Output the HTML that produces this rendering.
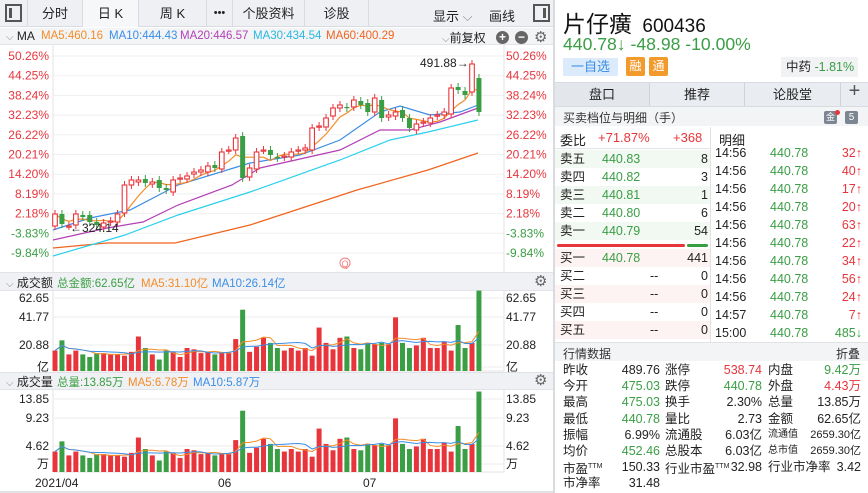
<!DOCTYPE html>
<html><head><meta charset="utf-8">
<style>
*{margin:0;padding:0;box-sizing:border-box}
body{width:868px;height:493px;overflow:hidden;background:#fff;font-family:"Liberation Sans","Noto Sans CJK SC",sans-serif;font-size:12px;color:#222;position:relative}
.a{position:absolute;white-space:nowrap}
.g{color:#3a9e44}.r{color:#e8353c}.o{color:#f28c28}.b{color:#3a8ee6}.p{color:#b33fb5}.c{color:#2bb7e0}.oo{color:#f0641e}
.tab{position:absolute;top:0;height:27px;border-right:1px solid #d8dbe0;text-align:center;line-height:27px;font-size:13px;color:#222}
.row{position:absolute;left:555px;width:155px;height:18px;line-height:18px;font-size:12.5px}
.row span{position:absolute}
.d{position:absolute;left:712px;width:156px;height:18px;line-height:18px;font-size:12.5px}
.d span{position:absolute}
.q{position:absolute;height:16px;line-height:16px;font-size:12.5px}
</style></head><body>
<div class="a" style="left:0;top:0;width:553px;height:27px;background:#eef0f3;border-bottom:1px solid #d8dbe0"></div>
<div class="a" style="left:5px;top:4px;width:17px;height:18px;border:2px solid #555"><div style="position:absolute;left:2px;top:2px;width:3px;height:10px;background:#555"></div></div>
<div class="tab" style="left:0;width:28px;"></div>
<div class="tab" style="left:28px;width:55px">分时</div>
<div class="tab" style="left:83px;width:56px;background:#f6f7f9">日 K</div>
<div class="tab" style="left:139px;width:68px">周 K</div>
<div class="tab" style="left:207px;width:26px;font-size:11px">•••</div>
<div class="tab" style="left:233px;width:72px">个股资料</div>
<div class="tab" style="left:305px;width:64px">诊股</div>
<div class="a" style="left:433px;top:6px;font-size:13px">显示 <span style="color:#888">⌵</span></div>
<div class="a" style="left:489px;top:6px;font-size:13px">画线</div>
<div class="a" style="left:533px;top:4px;width:17px;height:18px;border:2px solid #555"><div style="position:absolute;right:2px;top:2px;width:3px;height:10px;background:#555"></div></div>
<div class="a" style="left:0;top:28px;width:553px;height:17px;background:#f3f4f6;border-bottom:1px solid #e2e4e8"></div>
<div class="a" style="left:6px;top:29px;font-size:12px"><span style="color:#888;font-size:10px">⌵</span> MA</div>
<div class="a o" style="left:41px;top:30px;font-size:11.5px">MA5:460.16</div>
<div class="a b" style="left:109px;top:30px;font-size:11.5px">MA10:444.43</div>
<div class="a p" style="left:180px;top:30px;font-size:11.5px">MA20:446.57</div>
<div class="a c" style="left:253px;top:30px;font-size:11.5px">MA30:434.54</div>
<div class="a oo" style="left:326px;top:30px;font-size:11.5px">MA60:400.29</div>
<div class="a" style="left:442px;top:29px;font-size:12px"><span style="color:#888;font-size:10px">⌵</span>前复权</div>
<div class="a" style="left:496px;top:31px;width:13px;height:13px;border-radius:50%;background:#666;color:#fff;font-size:12px;line-height:12px;text-align:center;font-weight:bold">+</div>
<div class="a" style="left:515px;top:31px;width:13px;height:13px;border-radius:50%;background:#666;color:#fff;font-size:12px;line-height:12px;text-align:center;font-weight:bold">−</div>
<div class="a" style="left:534px;top:28px;font-size:15px;color:#666">⚙</div>
<div class="a" style="left:0;top:272px;width:553px;height:19px;background:#f0f1f4;border-top:1px solid #dfe1e5;border-bottom:1px solid #e2e4e8"></div>
<div class="a" style="left:6px;top:274px;font-size:12px"><span style="color:#888;font-size:10px">⌵</span> 成交额</div>
<div class="a g" style="left:57px;top:275px;font-size:11.5px">总金额:62.65亿</div>
<div class="a o" style="left:141px;top:275px;font-size:11.5px">MA5:31.10亿</div>
<div class="a b" style="left:212px;top:275px;font-size:11.5px">MA10:26.14亿</div>
<div class="a" style="left:534px;top:272px;font-size:15px;color:#666">⚙</div>
<div class="a" style="left:0;top:372px;width:553px;height:18px;background:#f0f1f4;border-top:1px solid #dfe1e5;border-bottom:1px solid #e2e4e8"></div>
<div class="a" style="left:6px;top:373px;font-size:12px"><span style="color:#888;font-size:10px">⌵</span> 成交量</div>
<div class="a g" style="left:57px;top:374px;font-size:11.5px">总量:13.85万</div>
<div class="a o" style="left:128px;top:374px;font-size:11.5px">MA5:6.78万</div>
<div class="a b" style="left:193px;top:374px;font-size:11.5px">MA10:5.87万</div>
<div class="a" style="left:534px;top:371px;font-size:15px;color:#666">⚙</div>
<svg id="ch" class="a" style="left:0;top:0" width="553" height="493" font-family="Liberation Sans" font-size="12"></svg>
<div class="a" style="left:553px;top:0;width:2px;height:493px;background:#d8dbe0"></div>
<div class="a" style="left:0;top:491px;width:553px;height:2px;background:#e0e2e6"></div>

<div class="a" style="left:563px;top:5px;font-size:23px;color:#111">片仔癀 <span style="font-size:19px;margin-left:4px">600436</span></div>
<div class="a g" style="left:563px;top:34px;font-size:17.6px">440.78↓ -48.98 -10.00%</div>
<div class="a" style="left:563px;top:58px;width:55px;height:18px;background:#dcebfb;color:#3a8ee6;font-size:13px;line-height:18px;text-align:center">一自选</div>
<div class="a" style="left:626px;top:57px;width:19px;height:19px;background:#f39a2c;color:#fff;font-size:12px;line-height:19px;text-align:center;border-radius:2px">融</div>
<div class="a" style="left:649px;top:57px;width:19px;height:19px;background:#f39a2c;color:#fff;font-size:12px;line-height:19px;text-align:center;border-radius:2px">通</div>
<div class="a" style="left:781px;top:57px;width:77px;height:20px;background:#f1f2f4;font-size:12.5px;line-height:20px;padding-left:5px">中药 <span class="g">-1.81%</span></div>
<div class="a" style="left:555px;top:82px;width:313px;height:25px;background:#e9ecf0;border-top:1px solid #d8dbe0;border-bottom:1px solid #d8dbe0"></div>
<div class="a" style="left:555px;top:83px;width:95px;height:23px;background:#e3e7ec;border-right:1px solid #cfd3d9;text-align:center;line-height:23px;font-size:13px">盘口</div>
<div class="a" style="left:650px;top:83px;width:95px;height:23px;border-right:1px solid #cfd3d9;text-align:center;line-height:23px;font-size:13px">推荐</div>
<div class="a" style="left:745px;top:83px;width:96px;height:23px;border-right:1px solid #cfd3d9;text-align:center;line-height:23px;font-size:13px">论股堂</div>
<div class="a" style="left:841px;top:80px;width:27px;text-align:center;font-size:20px;color:#555">+</div>
<div class="a" style="left:555px;top:107px;width:313px;height:19px;background:#f3f4f6"></div>
<div class="a" style="left:563px;top:109px;font-size:12px;color:#333">买卖档位与明细（手）</div>
<div class="a" style="left:824px;top:111px;width:13px;height:13px;background:#7c8592;border-radius:2px;color:#fff;font-size:9px;text-align:center;line-height:13px">金</div>
<div class="a" style="left:835px;top:110px;width:5px;height:5px;background:#e8353c;border-radius:50%"></div>
<div class="a" style="left:845px;top:111px;width:13px;height:13px;background:#7c8592;border-radius:2px;color:#fff;font-size:10px;text-align:center;line-height:13px">5</div>
<div id="ob"></div>
<div class="a" style="left:555px;top:126px;width:313px;height:22px;background:#fff"></div>
<div class="a" style="left:710px;top:127px;width:1px;height:216px;background:#dfe1e5"></div>
<div class="a" style="left:555px;top:148px;width:155px;height:1px;background:#e3e5e8"></div>
<div class="a" style="left:560px;top:130px;font-size:13px">委比</div>
<div class="a r" style="left:598px;top:130px;font-size:13px">+71.87%</div>
<div class="a r" style="left:673px;top:130px;font-size:13px">+368</div>
<div class="a" style="left:719px;top:130px;font-size:13px">明细</div>
<div class="a" style="left:557px;top:244px;width:128px;height:3px;background:#e8353c;border-radius:2px"></div>
<div class="a" style="left:687px;top:244px;width:21px;height:3px;background:#3a9e44;border-radius:2px"></div>
<div class="a" style="left:555px;top:342px;width:313px;height:19px;background:#f3f4f6;border-top:1px solid #e0e2e6"></div>
<div class="a" style="left:563px;top:345px;font-size:12px;color:#333">行情数据</div>
<div class="a" style="left:836px;top:345px;font-size:12px;color:#333">折叠</div>
<div id="qd"></div>
<script>
var N=62,X=function(i){return 55+i*6.95};
var C=[214,224,226,214,217,222,225,223,221,214,185,180,180,183,182,188,190,180,178,176,172,170,166,168,152,150,138,178,168,152,150,155,158,156,152,150,148,128,126,118,108,105,108,100,105,112,98,118,115,112,118,128,124,122,118,115,112,88,90,95,64,112];
var O=[];for(var i=0;i<N;i++)O.push(i?C[i-1]+((i*7)%5-2):226);
O[27]=136;O[61]=78;O[60]=92;O[10]=213;
var A=[16,24,13,16,13,11,14,14,13,13,12,15,27,18,13,9,16,15,11,18,17,14,15,13,14,14,25,48,15,19,26,22,18,16,18,16,18,12,34,22,17,26,27,18,17,22,21,22,21,42,22,18,20,26,18,18,23,16,36,18,22,63];
var s='';
function ln(x1,y1,x2,y2,c,w){return '<line x1="'+x1+'" y1="'+y1+'" x2="'+x2+'" y2="'+y2+'" stroke="'+c+'" stroke-width="'+(w||1)+'"/>'}
function tx(x,y,t,c,a){return '<text x="'+x+'" y="'+y+'" fill="'+c+'"'+(a?' text-anchor="'+a+'"':'')+'>'+t+'</text>'}
var lab=['50.26%','44.25%','38.24%','32.23%','26.22%','20.21%','14.20%','8.19%','2.18%','-3.83%','-9.84%'];
for(var k=0;k<11;k++){var y=56+k*19.7;s+=ln(53,y,504,y,'#efefef');var col=k<9?'#e8353c':'#3a9e44';s+=tx(49,y+4,lab[k],col,'end')+tx(506,y+4,lab[k],col);}
s+=ln(53,45,53,272,'#e3e3e3')+ln(504,45,504,272,'#e3e3e3');
s+=ln(53,291,53,371,'#e3e3e3')+ln(504,291,504,371,'#e3e3e3')+ln(53,371,504,371,'#e3e3e3');
s+=ln(53,390,53,472,'#e3e3e3')+ln(504,390,504,472,'#e3e3e3')+ln(53,472,504,472,'#e3e3e3');
[[298,'62.65'],[317,'41.77'],[345,'20.88'],[367,'亿']].forEach(function(p){s+=ln(53,p[0],504,p[0],'#eee');s+=tx(49,p[0]+4,p[1],'#222','end')+tx(506,p[0]+4,p[1],'#222');});
[[399,'13.85'],[418,'9.23'],[446,'4.62'],[464,'万']].forEach(function(p){s+=ln(53,p[0],504,p[0],'#eee');s+=tx(49,p[0]+4,p[1],'#222','end')+tx(506,p[0]+4,p[1],'#222');});
function pl(pts,c,w){return '<polyline fill="none" stroke="'+c+'" stroke-width="'+(w||1.2)+'" points="'+pts.map(function(p){return p.join(',')}).join(' ')+'"/>'}
s+=pl([[53,248],[107,243],[175,243],[250,225],[357,190],[428,170],[478,153]],'#f0641e');
s+=pl([[53,256],[125,235],[178,215],[250,192],[340,160],[390,140],[428,132],[478,120]],'#2bd0ec');
s+=pl([[53,240],[107,228],[143,222],[178,205],[232,185],[260,168],[340,150],[380,130],[410,130],[440,122],[478,108]],'#b33fb5');
s+=pl([[53,230],[90,218],[130,210],[178,185],[250,163],[300,155],[340,140],[380,112],[400,106],[430,115],[460,112],[478,105]],'#3a8ee6');
var m5=[];for(var i=0;i<N;i++){var a=0,n=0;for(var j=Math.max(0,i-4);j<=i;j++){a+=C[j];n++}m5.push([X(i),a/n]);}
s+=pl(m5,'#f28c28');
for(var i=0;i<N;i++){var x=X(i),o=O[i],c=C[i],up=c<=o,t=Math.min(o,c),b=Math.max(o,c),h=Math.max(b-t,1.2);
var col=up?'#e8353c':'#3a9e44';s+=ln(x,t-4,x,b+4,col);
s+=up?'<rect x="'+(x-2.3)+'" y="'+t+'" width="4.6" height="'+h+'" fill="#fff" stroke="'+col+'" stroke-width="1.1"/>':'<rect x="'+(x-2.5)+'" y="'+t+'" width="5" height="'+h+'" fill="'+col+'"/>';
var v=A[i]/62.65*80;s+='<rect x="'+(x-2.5)+'" y="'+(371-v)+'" width="5" height="'+v+'" fill="'+col+'"/>';
s+='<rect x="'+(x-2.5)+'" y="'+(472-v)+'" width="5" height="'+v+'" fill="'+col+'"/>';}
function ma(n,base){var r=[];for(var i=0;i<N;i++){var a=0,k=0;for(var j=Math.max(0,i-n+1);j<=i;j++){a+=A[j];k++}r.push([X(i),base-a/k/62.65*80]);}return r}
s+=pl(ma(5,371),'#f28c28',1)+pl(ma(10,371),'#3a8ee6',1)+pl(ma(5,472),'#f28c28',1)+pl(ma(10,472),'#3a8ee6',1);
s+=tx(420,67,'491.88→','#222')+tx(70,232,'←324.14','#222');
s+='<circle cx="345" cy="263" r="5" fill="none" stroke="#f08080"/>'+tx(345,267,'Q','#f08080','middle').replace('<text','<text font-size="9"');
s+=tx(35,487,'2021/04','#222')+tx(218,487,'06','#222')+tx(363,487,'07','#222');
document.getElementById('ch').innerHTML=s;
var ob='',names=['卖五','卖四','卖三','卖二','卖一'],pr=['440.83','440.82','440.81','440.80','440.79'],qv=['8','3','1','6','54'];
for(var k=0;k<5;k++){ob+='<div class="row" style="top:'+(150+k*18)+'px;background:'+(k%2?'#fff':'#f2f8f2')+'"><span style="left:5px">'+names[k]+'</span><span class="g" style="left:47px">'+pr[k]+'</span><span style="right:2px">'+qv[k]+'</span></div>';}
var bn=['买一','买二','买三','买四','买五'];
for(var k=0;k<5;k++){ob+='<div class="row" style="top:'+(249+k*18)+'px;background:'+(k%2?'#fff':'#fdf3f3')+'"><span style="left:5px">'+bn[k]+'</span><span class="'+(k?'':'g')+'" style="'+(k?'left:95px':'left:47px')+'">'+(k?'--':'440.78')+'</span><span style="right:2px">'+(k?'0':'441')+'</span></div>';}
var dv=['32','40','17','20','63','22','34','56','24','7'];
for(var k=0;k<11;k++){var last=k==10;ob+='<div class="d" style="top:'+(144+k*18)+'px"><span style="left:3px">'+(k==9?'14:57':last?'15:00':'14:56')+'</span><span class="g" style="left:58px">440.78</span><span class="'+(last?'g':'r')+'" style="right:6px">'+(last?'485↓':dv[k]+'↑')+'</span></div>';}
document.getElementById('ob').innerHTML=ob;
var R=[['昨收','489.76','','涨停','538.74','r','内盘','9.42万','g'],['今开','475.03','g','跌停','440.78','g','外盘','4.43万','r'],['最高','475.03','g','换手','2.30%','','总量','13.85万',''],['最低','440.78','g','量比','2.73','','金额','62.65亿',''],['振幅','6.99%','','流通股','6.03亿','','流通值','2659.30亿','s'],['均价','452.46','g','总股本','6.03亿','','总市值','2659.30亿','s'],['市盈<sup style="font-size:7px">TTM</sup>','150.33','','行业市盈<sup style="font-size:7px">TTM</sup>','32.98','','行业市净率','3.42','']];
var q='';R.forEach(function(r,k){var y=362+k*16.2;
q+='<div class="q" style="left:563px;top:'+y+'px">'+r[0]+'</div><div class="q '+r[2]+'" style="right:208px;top:'+y+'px">'+r[1]+'</div>';
q+='<div class="q" style="left:665px;top:'+y+'px">'+r[3]+'</div><div class="q '+r[5]+'" style="right:106px;top:'+y+'px">'+r[4]+'</div>';
var sm=r[8]=='s';q+='<div class="q" style="left:768px;top:'+y+'px;'+(sm?'font-size:10px':'')+'">'+r[6]+'</div><div class="q '+(sm?'':r[8])+'" style="right:7px;top:'+y+'px;'+(sm?'font-size:11px':'')+'">'+r[7]+'</div>';});
q+='<div class="q" style="left:563px;top:475px">市净率</div><div class="q" style="right:208px;top:475px">31.48</div>';
document.getElementById('qd').innerHTML=q;
</script>
</body></html>
